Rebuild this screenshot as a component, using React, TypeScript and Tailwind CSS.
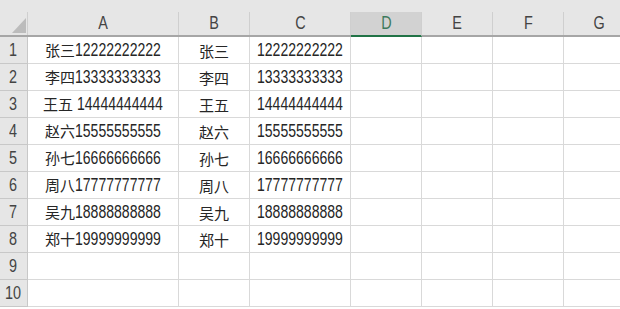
const cols = [
  { name: "A", w: "w-[151px]" },
  { name: "B", w: "w-[71px]" },
  { name: "C", w: "w-[101px]" },
  { name: "D", w: "w-[71px]" },
  { name: "E", w: "w-[71px]" },
  { name: "F", w: "w-[71px]" },
  { name: "G", w: "w-[71px]" },
];

const people = [
  ["张三", "12222222222"],
  ["李四", "13333333333"],
  ["王五", "14444444444"],
  ["赵六", "15555555555"],
  ["孙七", "16666666666"],
  ["周八", "17777777777"],
  ["吴九", "18888888888"],
  ["郑十", "19999999999"],
];

const font = "font-['Liberation_Sans','Noto_Sans_CJK_SC',sans-serif]";

// tall, narrow digits like the spreadsheet font
const Digits = ({ text }: { text: string }) => (
  <span className="inline-block w-[86px] whitespace-nowrap">
    <span className="inline-block origin-left scale-x-[0.78] text-[18px] leading-[18px]">{text}</span>
  </span>
);

const Han = ({ text }: { text: string }) => (
  <span className="text-[15px] leading-[18px] font-['Noto_Sans_CJK_SC',sans-serif]">{text}</span>
);

const Narrow = ({ text }: { text: string }) => (
  <span className="inline-block scale-x-[0.8] text-[18px] leading-none">{text}</span>
);

export default function App() {
  return (
    <div className={`w-[620px] h-[309px] overflow-hidden bg-white ${font} text-[#262626]`}>
      {/* top strip */}
      <div className="h-[12px] bg-[#e6e6e6]" />

      {/* column header */}
      <div className="flex h-[25px] bg-[#e6e6e6] border-b-2 border-[#a6a6a6]">
        <div className="w-[28px] shrink-0 border-r border-[#cfcfcf] relative">
          <svg className="absolute left-[12px] top-[6px]" width="14" height="15" viewBox="0 0 14 15">
            <polygon points="0,15 14,0 14,15" fill="#bcbcbc" />
          </svg>
        </div>
        {cols.map((c) => (
          <div
            key={c.name}
            className={`${c.w} shrink-0 flex items-end justify-center pb-[3px] border-r border-[#cfcfcf] ${
              c.name === "D" ? "bg-[#d2d2d2] text-[#3d7a5c] border-b-2 border-b-[#217346] -mb-[2px]" : "text-[#444]"
            }`}
          >
            <Narrow text={c.name} />
          </div>
        ))}
      </div>

      {/* body */}
      {Array.from({ length: 10 }, (_, i) => {
        const p = people[i];
        return (
          <div key={i} className="flex h-[27px]">
            <div className="w-[28px] shrink-0 bg-[#e6e6e6] border-r border-b border-[#c8c8c8] flex items-center justify-center text-[#444]">
              <Narrow text={String(i + 1)} />
            </div>
            {cols.map((c, j) => (
              <div
                key={c.name}
                className={`${c.w} shrink-0 border-r border-b border-[#d9d9d9] flex items-center justify-center whitespace-nowrap pt-[2px]`}
              >
                {p && j < 3 && (
                  <div className="flex items-baseline">
                    {j === 0 && (
                      <>
                        <Han text={p[0]} />
                        {i === 2 && <span className="w-[4px]" />}
                        <Digits text={p[1]} />
                      </>
                    )}
                    {j === 1 && <Han text={p[0]} />}
                    {j === 2 && <Digits text={p[1]} />}
                  </div>
                )}
              </div>
            ))}
          </div>
        );
      })}
    </div>
  );
}
